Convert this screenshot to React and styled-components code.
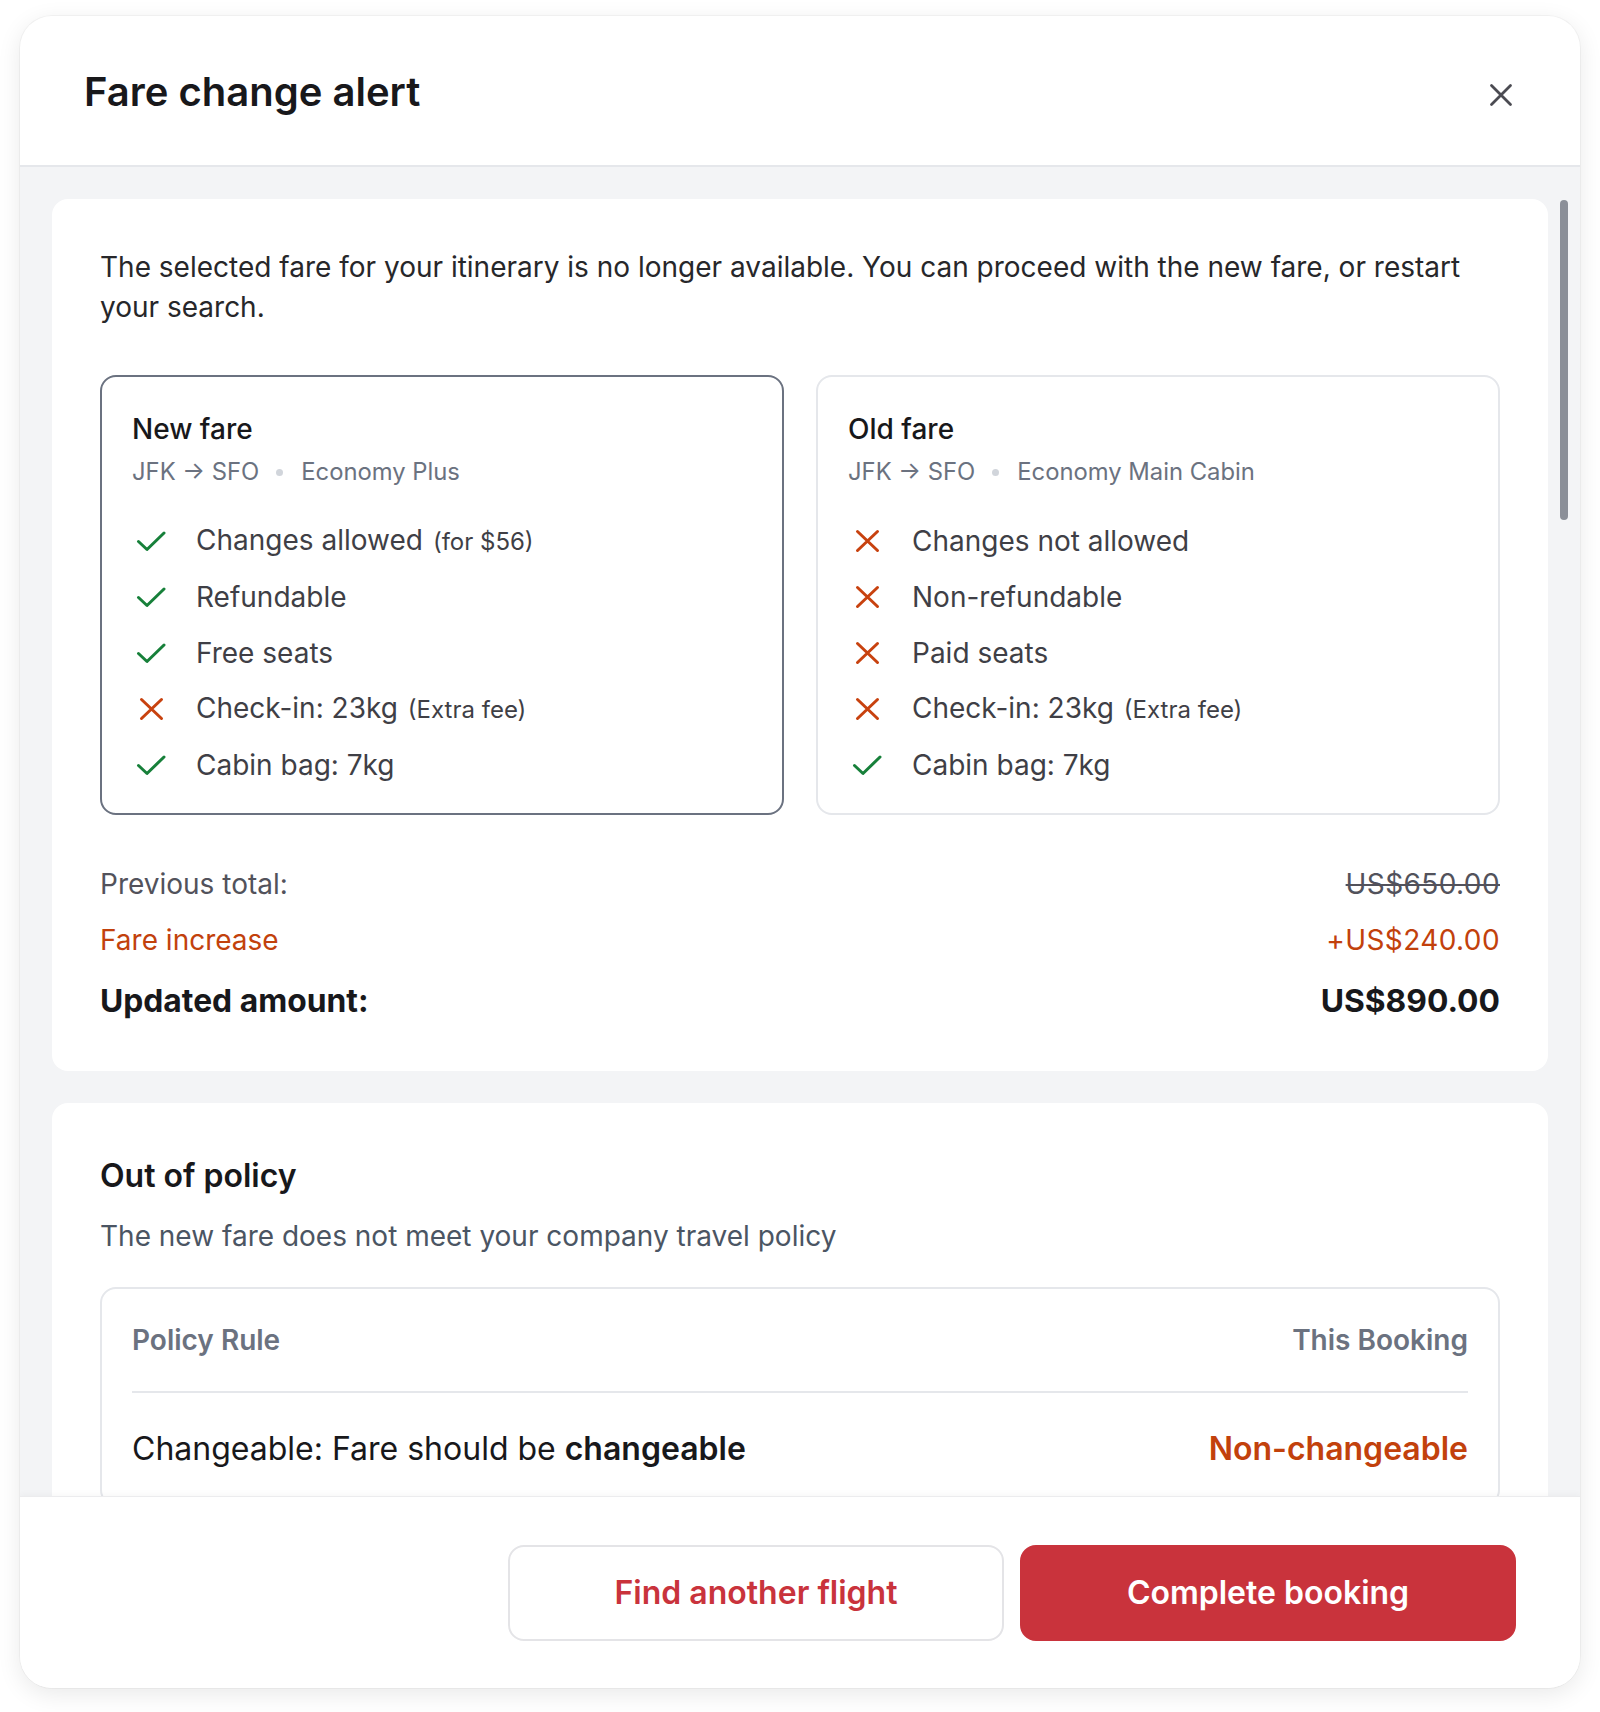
import React from "react";
import styled, { createGlobalStyle } from "styled-components";

const Global = createGlobalStyle`
  html, body { margin: 0; padding: 0; background: #ffffff; }
  body { font-family: Inter, "Noto Sans", "Liberation Sans", sans-serif; -webkit-font-smoothing: antialiased; }
  * { box-sizing: border-box; }
`;

const Page = styled.div`
  padding: 16px 20px 24px 20px;
  width: 1600px;
`;

const Modal = styled.div`
  width: 1560px;
  height: 1672px;
  background: #ffffff;
  border-radius: 32px;
  box-shadow: 0 6px 24px rgba(0, 0, 0, 0.09), 0 0 0 1px rgba(0, 0, 0, 0.035);
  overflow: hidden;
  display: flex;
  flex-direction: column;
`;

const Header = styled.header`
  height: 151px;
  flex: 0 0 auto;
  display: flex;
  align-items: center;
  justify-content: space-between;
  padding: 2px 66px 0 64px;
  border-bottom: 2px solid #e5e7eb;
`;

const Title = styled.h1`
  margin: 0;
  font-size: 40px;
  line-height: 52px;
  font-weight: 600;
  color: #18181b;
  letter-spacing: 0;
`;

const CloseButton = styled.button`
  width: 26px;
  height: 26px;
  padding: 0;
  margin-top: 6px;
  border: 0;
  background: transparent;
  display: flex;
  align-items: center;
  justify-content: center;
  cursor: pointer;
`;

const Body = styled.div`
  flex: 1 1 auto;
  position: relative;
  overflow: hidden;
  background: #f3f4f6;
  padding: 32px 32px;
  display: flex;
  flex-direction: column;
  gap: 32px;
`;

const ScrollThumb = styled.div`
  position: absolute;
  top: 33px;
  right: 12px;
  width: 8px;
  height: 320px;
  border-radius: 4px;
  background: #8b8f98;
`;

const Card = styled.section`
  flex: 0 0 auto;
  background: #ffffff;
  border-radius: 16px;
  padding: 48px;
`;

const Lead = styled.p`
  margin: 0;
  font-size: 28px;
  line-height: 40px;
  color: #27272a;
`;

const FareGrid = styled.div`
  display: grid;
  grid-template-columns: 1fr 1fr;
  gap: 32px;
  margin-top: 48px;
`;

const FareBox = styled.div`
  border: 2px solid ${(p) => (p.$selected ? "#6b7280" : "#e5e7eb")};
  border-radius: 16px;
  padding: 34px 30px 28px 30px;
`;

const FareTitle = styled.div`
  font-size: 28px;
  line-height: 36px;
  font-weight: 500;
  color: #18181b;
`;

const FareMeta = styled.div`
  margin-top: 9px;
  display: flex;
  align-items: center;
  font-size: 23.8px;
  line-height: 32px;
  color: #6b7280;
`;

const Dot = styled.span`
  width: 7px;
  height: 7px;
  border-radius: 50%;
  background: #d1d5db;
  margin: 0 18px 0 17px;
`;

const FeatureList = styled.ul`
  list-style: none;
  margin: 33px 0 0 0;
  padding: 0;
  display: flex;
  flex-direction: column;
  gap: 16px;
`;

const Feature = styled.li`
  display: flex;
  align-items: center;
  gap: 30px;
  height: 40px;
  font-size: 28px;
  line-height: 40px;
  color: #3f3f46;
`;

const IconBox = styled.span`
  width: 32px;
  height: 32px;
  flex: 0 0 32px;
  margin-left: 2px;
  display: flex;
`;

const Note = styled.span`
  font-size: 24px;
  margin-left: 10px;
`;

const Totals = styled.div`
  margin-top: 49px;
  display: flex;
  flex-direction: column;
  gap: 16px;
`;

const TotalRow = styled.div`
  display: flex;
  justify-content: space-between;
  align-items: center;
  font-size: ${(p) => (p.$strong ? "31.8px" : "28px")};
  line-height: ${(p) => (p.$strong ? "44px" : "40px")};
  font-weight: ${(p) => (p.$strong ? 700 : 400)};
  color: ${(p) => (p.$tone === "alert" ? "#c2410c" : p.$strong ? "#18181b" : "#52525b")};
  margin-top: ${(p) => (p.$strong ? "3px" : "0")};
`;

const Amount = styled.span`
  letter-spacing: ${(p) => (p.$strong ? "0" : "0.4px")};
  text-decoration: ${(p) => (p.$struck ? "line-through" : "none")};
`;

const SectionTitle = styled.h2`
  margin: 0;
  font-size: 32px;
  line-height: 48px;
  font-weight: 600;
  color: #18181b;
  padding-top: 1px;
`;

const SectionText = styled.p`
  margin: 16px 0 0 0;
  font-size: 28px;
  line-height: 40px;
  color: #4b5563;
`;

const PolicyTable = styled.div`
  margin-top: 31px;
  border: 2px solid #e5e7eb;
  border-radius: 16px;
  padding: 0 30px;
`;

const PolicyHead = styled.div`
  display: flex;
  justify-content: space-between;
  padding: 32px 0 32px 0;
  border-bottom: 2px solid #e5e7eb;
  font-size: 28px;
  line-height: 38px;
  font-weight: 600;
  color: #6b7280;
`;

const PolicyRow = styled.div`
  display: flex;
  justify-content: space-between;
  padding: 33px 0 32px 0;
  font-size: 32px;
  line-height: 46px;
  color: #18181b;
  b { font-weight: 600; }
`;

const Violation = styled.span`
  font-weight: 600;
  color: #c2410c;
`;

const Footer = styled.footer`
  flex: 0 0 auto;
  height: 192px;
  display: flex;
  justify-content: flex-end;
  align-items: center;
  gap: 16px;
  padding: 0 64px;
  background: #ffffff;
  border-top: 1px solid #ececee;
  box-shadow: 0 -2px 6px rgba(0, 0, 0, 0.03);
  position: relative;
`;

const Button = styled.button`
  width: 496px;
  height: 96px;
  border-radius: 16px;
  font-family: inherit;
  font-size: 32px;
  font-weight: 600;
  cursor: pointer;
  border: 2px solid ${(p) => (p.$primary ? "#c9333c" : "#e4e4e7")};
  background: ${(p) => (p.$primary ? "#c9333c" : "#ffffff")};
  color: ${(p) => (p.$primary ? "#ffffff" : "#c9333c")};
`;

const Check = () => (
  <svg width="32" height="32" viewBox="0 0 32 32" fill="none">
    <path d="M4.5 16.5 L13 24.5 L30 8" stroke="#17803a" strokeWidth="3" strokeLinecap="round" strokeLinejoin="round" />
  </svg>
);

const Cross = () => (
  <svg width="32" height="32" viewBox="0 0 32 32" fill="none">
    <path d="M7.5 6.5 L27.5 25.5 M27.5 6.5 L7.5 25.5" stroke="#c8420f" strokeWidth="3" strokeLinecap="round" />
  </svg>
);

const fares = [
  {
    title: "New fare",
    cabin: "Economy Plus",
    selected: true,
    items: [
      { ok: true, text: "Changes allowed", note: "(for $56)" },
      { ok: true, text: "Refundable" },
      { ok: true, text: "Free seats" },
      { ok: false, text: "Check-in: 23kg", note: "(Extra fee)" },
      { ok: true, text: "Cabin bag: 7kg" },
    ],
  },
  {
    title: "Old fare",
    cabin: "Economy Main Cabin",
    selected: false,
    items: [
      { ok: false, text: "Changes not allowed" },
      { ok: false, text: "Non-refundable" },
      { ok: false, text: "Paid seats" },
      { ok: false, text: "Check-in: 23kg", note: "(Extra fee)" },
      { ok: true, text: "Cabin bag: 7kg" },
    ],
  },
];

export default function App() {
  return (
    <Page>
      <Global />
      <Modal>
        <Header>
          <Title>Fare change alert</Title>
          <CloseButton aria-label="Close">
            <svg width="24" height="24" viewBox="0 0 24 24" fill="none">
              <path d="M2.5 2.5 L21.5 21.5 M21.5 2.5 L2.5 21.5" stroke="#4b4b52" strokeWidth="2.8" strokeLinecap="round" />
            </svg>
          </CloseButton>
        </Header>
        <Body>
          <Card>
            <Lead>
              The selected fare for your itinerary is no longer available. You can proceed with the new fare, or restart your search.
            </Lead>
            <FareGrid>
              {fares.map((f) => (
                <FareBox key={f.title} $selected={f.selected}>
                  <FareTitle>{f.title}</FareTitle>
                  <FareMeta>
                    <span>JFK → SFO</span>
                    <Dot />
                    <span>{f.cabin}</span>
                  </FareMeta>
                  <FeatureList>
                    {f.items.map((it, i) => (
                      <Feature key={i}>
                        <IconBox>{it.ok ? <Check /> : <Cross />}</IconBox>
                        <span>
                          {it.text}
                          {it.note && <Note>{it.note}</Note>}
                        </span>
                      </Feature>
                    ))}
                  </FeatureList>
                </FareBox>
              ))}
            </FareGrid>
            <Totals>
              <TotalRow>
                <span>Previous total:</span>
                <Amount $struck>US$650.00</Amount>
              </TotalRow>
              <TotalRow $tone="alert">
                <span>Fare increase</span>
                <Amount>+US$240.00</Amount>
              </TotalRow>
              <TotalRow $strong>
                <span>Updated amount:</span>
                <Amount $strong>US$890.00</Amount>
              </TotalRow>
            </Totals>
          </Card>
          <Card>
            <SectionTitle>Out of policy</SectionTitle>
            <SectionText>The new fare does not meet your company travel policy</SectionText>
            <PolicyTable>
              <PolicyHead>
                <span>Policy Rule</span>
                <span>This Booking</span>
              </PolicyHead>
              <PolicyRow>
                <span>
                  Changeable: Fare should be <b>changeable</b>
                </span>
                <Violation>Non-changeable</Violation>
              </PolicyRow>
            </PolicyTable>
          </Card>
          <ScrollThumb />
        </Body>
        <Footer>
          <Button>Find another flight</Button>
          <Button $primary>Complete booking</Button>
        </Footer>
      </Modal>
    </Page>
  );
}
